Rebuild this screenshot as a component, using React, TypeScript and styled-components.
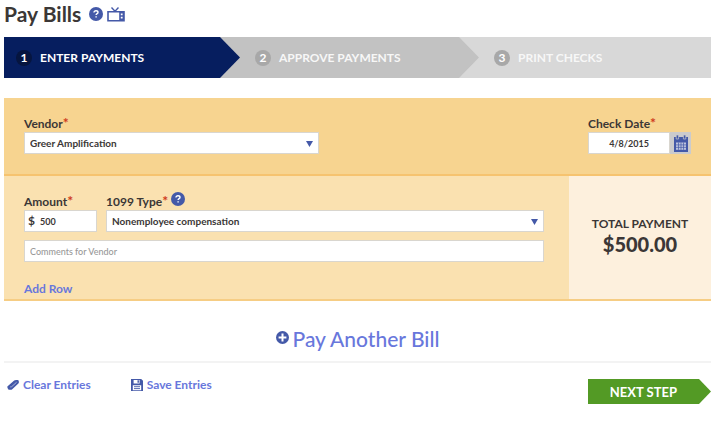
import React, { useState } from "react";
import styled, { createGlobalStyle } from "styled-components";

const GlobalStyle = createGlobalStyle`
  *, *::before, *::after { box-sizing: border-box; }
  body {
    margin: 0;
    background: #fff;
    color: #3b3736;
    font: 700 12px/16px Lato, "Open Sans", sans-serif;
  }
  input, select, button { font: inherit; color: inherit; margin: 0; }
`;

const Page = styled.main`
  padding: 0 15px 0 4px;
`;

const Header = styled.header`
  display: flex;
  align-items: center;
  gap: 4px;
  height: 28px;
`;

const Title = styled.h1`
  margin: 0 4px 0 0;
  font-size: 21px;
  line-height: 28px;
`;

const IconButton = styled.button`
  display: flex;
  padding: 0;
  border: 0;
  background: none;
  cursor: pointer;
`;

const Steps = styled.ol`
  display: grid;
  grid-template-columns: 236fr 239fr 232fr;
  margin: 9px 0 20px;
  padding: 0;
  list-style: none;
`;

const Step = styled.li<{ $next: string }>`
  background: ${(p) => p.$next};
`;

const StepShape = styled.div<{ $fill: string; $ink: string; $first: boolean; $last: boolean }>`
  display: flex;
  align-items: center;
  gap: 8px;
  height: 41px;
  padding-left: ${(p) => (p.$first ? 12 : 15)}px;
  background: ${(p) => p.$fill};
  color: ${(p) => p.$ink};
  clip-path: ${(p) =>
    p.$last
      ? "none"
      : "polygon(0 0, calc(100% - 20px) 0, 100% 50%, calc(100% - 20px) 100%, 0 100%)"};
`;

const StepNumber = styled.span<{ $fill: string }>`
  width: 16px;
  height: 16px;
  border-radius: 50%;
  background: ${(p) => p.$fill};
  color: #fff;
  text-align: center;
`;

const BillTop = styled.section`
  display: flex;
  justify-content: space-between;
  padding: 19px 20px 20px;
  border-bottom: 2px solid #f6c36f;
  background: #f7d490;
`;

const BillBody = styled.section`
  display: grid;
  grid-template-columns: minmax(0, 1fr) 142px;
  border-bottom: 2px solid #f6cd84;
  background: #fae1b0;
`;

const Entry = styled.div`
  padding: 16px 25px 2px 20px;
`;

const FieldRow = styled.div`
  display: grid;
  grid-template-columns: 73px minmax(0, 1fr);
  gap: 9px;
  margin-bottom: 8px;
`;

const Field = styled.div<{ $width?: string }>`
  width: ${(p) => p.$width ?? "auto"};
`;

const LabelRow = styled.div<{ $tall?: boolean }>`
  display: flex;
  align-items: flex-end;
  gap: 3px;
  height: ${(p) => (p.$tall ? 18 : 15)}px;
`;

const HelpSlot = styled.span`
  align-self: flex-start;
`;

const Required = styled.span`
  color: #cf3a1c;
  font-size: 14px;
  line-height: 12px;
`;

const Box = styled.div`
  display: flex;
  align-items: center;
  position: relative;
  height: 22px;
  border: 1px solid #d9d6cf;
  background: #fff;
`;

const SelectInput = styled.select`
  width: 100%;
  height: 20px;
  padding: 0 20px 0 5px;
  border: 0;
  background: transparent;
  appearance: none;
  font-size: 10px;
`;

const Arrow = styled.svg`
  position: absolute;
  right: 5px;
  top: 8px;
  pointer-events: none;
`;

const TextInput = styled.input<{ $center?: boolean }>`
  width: 100%;
  min-width: 0;
  height: 20px;
  padding: 0 5px;
  border: 0;
  background: transparent;
  font-size: 9px;
  text-align: ${(p) => (p.$center ? "center" : "left")};
  &::placeholder {
    color: #999;
    opacity: 1;
    font-weight: 500;
  }
`;

const Currency = styled.span`
  padding-left: 3px;
`;

const DateRow = styled.div`
  display: grid;
  grid-template-columns: minmax(0, 1fr) 21px;
`;

const CalendarButton = styled(IconButton)`
  align-items: center;
  justify-content: center;
  background: #cbcbcd;
`;

const Link = styled.a`
  display: inline-flex;
  align-items: center;
  gap: 4px;
  color: #6877dc;
  text-decoration: none;
`;

const AddRow = styled(Link)`
  margin-top: 19px;
  vertical-align: top;
`;

const Total = styled.aside`
  display: flex;
  flex-direction: column;
  justify-content: center;
  align-items: center;
  padding-bottom: 4px;
  background: #fdf0dd;
`;

const Amount = styled.strong`
  font-size: 20px;
  line-height: 24px;
`;

const Another = styled.div`
  display: flex;
  justify-content: center;
  padding: 24px 0 8px;
  border-bottom: 2px solid #f3f3f3;
`;

const AnotherLink = styled(Link)`
  font-size: 21px;
  line-height: 28px;
  font-weight: 500;
`;

const Footer = styled.footer`
  display: flex;
  align-items: flex-start;
  gap: 40px;
  padding: 14px 0 20px 3px;
`;

const NextButton = styled.button`
  height: 25px;
  margin: 2px 0 0 auto;
  padding: 0 34px 0 22px;
  border: 0;
  background: #539a25;
  color: #fff;
  font-size: 13px;
  clip-path: polygon(0 0, calc(100% - 12px) 0, 100% 50%, calc(100% - 12px) 100%, 0 100%);
  cursor: pointer;
`;

const BLUE = "#4459a8";

const HelpIcon = () => (
  <svg width="14" height="14" viewBox="0 0 14 14" aria-hidden="true">
    <circle cx="7" cy="7" r="7" fill={BLUE} />
    <path
      d="M5 5.6C5 4.4 5.8 3.8 7 3.8s2 .6 2 1.6c0 1.3-1.9 1.2-1.9 2.6M7.1 9.3v1.3"
      fill="none"
      stroke="#fff"
      strokeWidth="1.4"
    />
  </svg>
);

const TvIcon = () => (
  <svg width="18" height="15" viewBox="0 0 18 15" aria-hidden="true">
    <path d="M4.5.6 8 4.2 11.5.6" fill="none" stroke={BLUE} strokeWidth="1.4" />
    <path d="M1 4.7h16v9.1H1z" fill="none" stroke={BLUE} strokeWidth="1.6" />
    <path d="M12.2 4.5H17v9.5h-4.8z" fill={BLUE} />
    <path d="M13.8 6.6h1.8v1.6h-1.8zM13.8 9.8h1.8v1.6h-1.8z" fill="#fff" />
  </svg>
);

const CalendarIcon = () => (
  <svg width="14" height="17" viewBox="0 0 14 17" aria-hidden="true">
    <path d="M0 2h14v15H0z" fill={BLUE} />
    <path d="M2.2 0h2.4v4H2.2zM9.4 0h2.4v4H9.4z" fill={BLUE} stroke="#cbcbcd" strokeWidth=".7" />
    <path d="M2 7.5h10v7.3H2z" fill="#bcc3dd" />
    <path
      d="M2 9.9h10M2 12.4h10M4.5 7.5v7.3M7 7.5v7.3M9.5 7.5v7.3"
      stroke={BLUE}
      strokeWidth=".7"
    />
  </svg>
);

const PlusIcon = () => (
  <svg width="13" height="16" viewBox="0 0 13 16" aria-hidden="true">
    <circle cx="6.5" cy="6.5" r="6.5" fill={BLUE} />
    <path d="M6.5 2.6v7.8M2.6 6.5h7.8" stroke="#fff" strokeWidth="2" />
  </svg>
);

const EraserIcon = () => (
  <svg width="12" height="12" viewBox="0 0 12 12" aria-hidden="true">
    <path
      d="M.6 7.2 7.2 1.5Q8 .9 9 .9h1.6q.9 0 1.1.9l.2 1.3q.1.8-.5 1.4L5.2 10.3q-.6.5-1.4.5H2q-.7 0-1-.7L.4 8.5q-.3-.8.2-1.3z"
      fill={BLUE}
    />
    <path d="M3.2 7.9h.7q.6 0 1.1-.5l4.6-4.2" fill="none" stroke="#b4bde0" strokeWidth=".9" />
  </svg>
);

const SaveIcon = () => (
  <svg width="12" height="12" viewBox="0 0 12 12" aria-hidden="true">
    <path d="M0 0h10.2L12 1.8V12H0z" fill={BLUE} />
    <path d="M2.6.9h6v3.5h-6zM1.8 6.2h8.4v5H1.8z" fill="#fff" />
    <path d="M6.5 1.2h1.4v2.6H6.5z" fill={BLUE} />
    <path d="M3 7.7h6M3 9.6h6" stroke={BLUE} strokeWidth=".9" />
  </svg>
);

const SelectField = ({ id, options }: { id: string; options: string[] }) => (
  <Box>
    <SelectInput id={id} defaultValue={options[0]}>
      {options.map((o) => (
        <option key={o}>{o}</option>
      ))}
    </SelectInput>
    <Arrow width="7" height="6" viewBox="0 0 7 6" aria-hidden="true">
      <path d="M0 0h7L3.5 6z" fill={BLUE} />
    </Arrow>
  </Box>
);

const FieldLabel = ({ id, text }: { id: string; text: string }) => (
  <label htmlFor={id}>
    {text}
    <Required>*</Required>
  </label>
);

const STEPS = [
  { label: "ENTER PAYMENTS", fill: "#061e5f", ink: "#fff", badge: "#06153f", next: "#c2c2c2" },
  { label: "APPROVE PAYMENTS", fill: "#c2c2c2", ink: "#f7f7f7", badge: "#a8a8a8", next: "#d8d8d8" },
  { label: "PRINT CHECKS", fill: "#d8d8d8", ink: "#f7f7f7", badge: "#a8a8a8", next: "#d8d8d8" },
];

export default function App() {
  const [amount, setAmount] = useState("500");
  const [date, setDate] = useState("4/8/2015");
  const total = (Number(amount) || 0).toFixed(2);

  return (
    <>
      <GlobalStyle />
      <Page>
        <Header>
          <Title>Pay Bills</Title>
          <IconButton type="button" aria-label="Help">
            <HelpIcon />
          </IconButton>
          <IconButton type="button" aria-label="Watch video">
            <TvIcon />
          </IconButton>
        </Header>

        <Steps>
          {STEPS.map((s, i) => (
            <Step key={s.label} $next={s.next}>
              <StepShape
                $fill={s.fill}
                $ink={s.ink}
                $first={i === 0}
                $last={i === STEPS.length - 1}
              >
                <StepNumber $fill={s.badge}>{i + 1}</StepNumber>
                {s.label}
              </StepShape>
            </Step>
          ))}
        </Steps>

        <BillTop>
          <Field $width="295px">
            <LabelRow>
              <FieldLabel id="vendor" text="Vendor" />
            </LabelRow>
            <SelectField id="vendor" options={["Greer Amplification"]} />
          </Field>
          <Field $width="103px">
            <LabelRow>
              <FieldLabel id="date" text="Check Date" />
            </LabelRow>
            <DateRow>
              <Box>
                <TextInput
                  id="date"
                  $center
                  value={date}
                  onChange={(e) => setDate(e.target.value)}
                />
              </Box>
              <CalendarButton type="button" aria-label="Choose date">
                <CalendarIcon />
              </CalendarButton>
            </DateRow>
          </Field>
        </BillTop>

        <BillBody>
          <Entry>
            <FieldRow>
              <Field>
                <LabelRow $tall>
                  <FieldLabel id="amount" text="Amount" />
                </LabelRow>
                <Box>
                  <Currency>$</Currency>
                  <TextInput
                    id="amount"
                    value={amount}
                    onChange={(e) => setAmount(e.target.value)}
                  />
                </Box>
              </Field>
              <Field>
                <LabelRow $tall>
                  <FieldLabel id="type" text="1099 Type" />
                  <HelpSlot>
                    <IconButton type="button" aria-label="Help with 1099 type">
                      <HelpIcon />
                    </IconButton>
                  </HelpSlot>
                </LabelRow>
                <SelectField id="type" options={["Nonemployee compensation"]} />
              </Field>
            </FieldRow>
            <Box>
              <TextInput aria-label="Comments for Vendor" placeholder="Comments for Vendor" />
            </Box>
            <AddRow href="#add-row">Add Row</AddRow>
          </Entry>
          <Total>
            <span>TOTAL PAYMENT</span>
            <Amount>${total}</Amount>
          </Total>
        </BillBody>

        <Another>
          <AnotherLink href="#another-bill">
            <PlusIcon />
            Pay Another Bill
          </AnotherLink>
        </Another>

        <Footer>
          <Link href="#clear">
            <EraserIcon />
            Clear Entries
          </Link>
          <Link href="#save">
            <SaveIcon />
            Save Entries
          </Link>
          <NextButton type="button">NEXT STEP</NextButton>
        </Footer>
      </Page>
    </>
  );
}
